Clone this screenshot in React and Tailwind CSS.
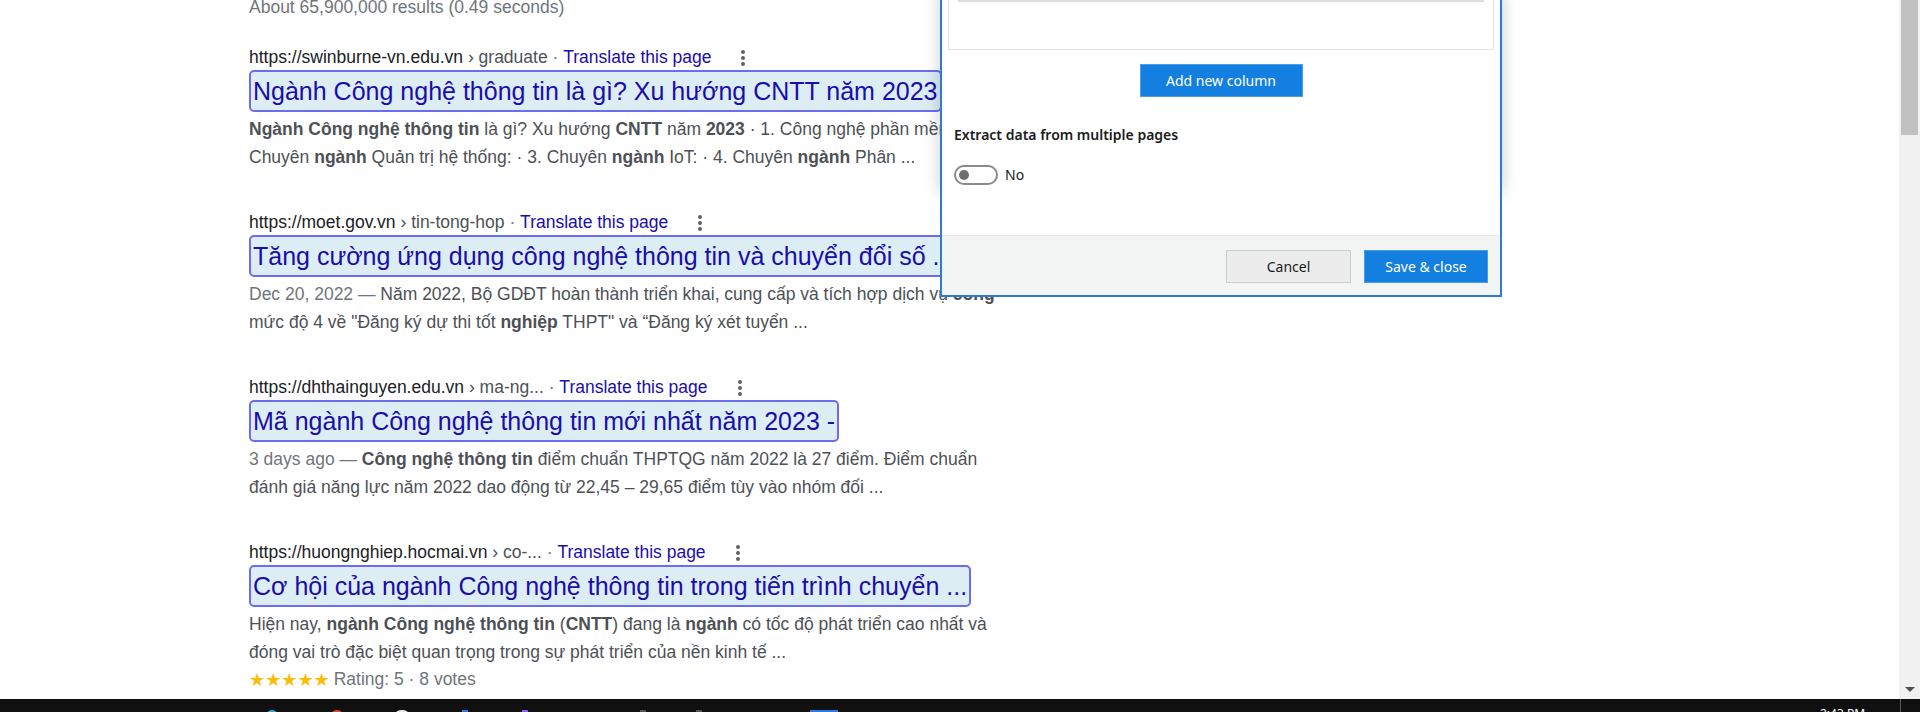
import { useState } from "react";

const results = [
  {
    site: "https://swinburne-vn.edu.vn",
    path: "› graduate",
    title: "Ngành Công nghệ thông tin là gì? Xu hướng CNTT năm 2023",
    lines: [
      [
        ["b", "Ngành Công nghệ thông tin"],
        ["t", " là gì? Xu hướng "],
        ["b", "CNTT"],
        ["t", " năm "],
        ["b", "2023"],
        ["t", " · 1. Công nghệ phần mềm: · 2."],
      ],
      [
        ["t", "Chuyên "],
        ["b", "ngành"],
        ["t", " Quản trị hệ thống: · 3. Chuyên "],
        ["b", "ngành"],
        ["t", " IoT: · 4. Chuyên "],
        ["b", "ngành"],
        ["t", " Phân ..."],
      ],
    ],
  },
  {
    site: "https://moet.gov.vn",
    path: "› tin-tong-hop",
    title: "Tăng cường ứng dụng công nghệ thông tin và chuyển đổi số ...",
    lines: [
      [
        ["d", "Dec 20, 2022 — "],
        ["t", "Năm 2022, Bộ GDĐT hoàn thành triển khai, cung cấp và tích hợp dịch vụ "],
        ["b", "công"],
      ],
      [
        ["t", "mức độ 4 về \"Đăng ký dự thi tốt "],
        ["b", "nghiệp"],
        ["t", " THPT\" và “Đăng ký xét tuyển ..."],
      ],
    ],
  },
  {
    site: "https://dhthainguyen.edu.vn",
    path: "› ma-ng...",
    title: "Mã ngành Công nghệ thông tin mới nhất năm 2023 -",
    lines: [
      [
        ["d", "3 days ago — "],
        ["b", "Công nghệ thông tin"],
        ["t", " điểm chuẩn THPTQG năm 2022 là 27 điểm. Điểm chuẩn"],
      ],
      [["t", "đánh giá năng lực năm 2022 dao động từ 22,45 – 29,65 điểm tùy vào nhóm đối ..."]],
    ],
  },
  {
    site: "https://huongnghiep.hocmai.vn",
    path: "› co-...",
    title: "Cơ hội của ngành Công nghệ thông tin trong tiến trình chuyển ...",
    lines: [
      [
        ["t", "Hiện nay, "],
        ["b", "ngành Công nghệ thông tin"],
        ["t", " ("],
        ["b", "CNTT"],
        ["t", ") đang là "],
        ["b", "ngành"],
        ["t", " có tốc độ phát triển cao nhất và"],
      ],
      [["t", "đóng vai trò đặc biệt quan trọng trong sự phát triển của nền kinh tế ..."]],
    ],
    rating: true,
  },
];

function Dots() {
  return (
    <svg width="6" height="18" viewBox="0 0 6 18" className="ml-[29px]">
      <circle cx="3" cy="3" r="2" fill="#5f6368" />
      <circle cx="3" cy="9" r="2" fill="#5f6368" />
      <circle cx="3" cy="15" r="2" fill="#5f6368" />
    </svg>
  );
}

function Result({ r, last }) {
  return (
    <div className={last ? "flex flex-col" : "flex flex-col mb-[39px]"}>
      <div className="h-[25px] flex items-center text-[17.5px] whitespace-nowrap">
        <span className="text-[#202124]">{r.site}</span>
        <span className="text-[#4d5156]">&nbsp;{r.path}</span>
        <span className="text-[#70757a]">&nbsp;·&nbsp;</span>
        <span className="text-[#1a0dab]">Translate this page</span>
        <Dots />
      </div>
      <div className="self-start h-[42px] flex items-center px-[2px] border-2 border-[#6b6cf2] rounded-[5px] bg-[#ddedf4] whitespace-nowrap">
        <span className="text-[25px] leading-none text-[#1a0dab]">{r.title}</span>
      </div>
      <div className="mt-[3px] text-[17.5px] leading-[28px] text-[#4d5156] whitespace-nowrap">
        {r.lines.map((line, i) => (
          <div key={i}>
            {line.map(([k, t], j) =>
              k === "b" ? (
                <b key={j} className="font-bold text-[#4d5156]">{t}</b>
              ) : k === "d" ? (
                <span key={j} className="text-[#70757a]">{t}</span>
              ) : (
                <span key={j}>{t}</span>
              )
            )}
          </div>
        ))}
      </div>
      {r.rating && (
        <div className="h-[26px] flex items-center text-[17.5px] text-[#70757a] whitespace-nowrap">
          <span className="text-[#fbbc04] text-[18px] font-['DejaVu_Sans',sans-serif] tracking-[0px]">★★★★★</span>
          <span className="ml-[4px]">Rating: 5 · 8 votes</span>
        </div>
      )}
    </div>
  );
}

function Toggle({ on }) {
  return (
    <div className="flex items-center gap-[7px]">
      <div className="w-[44px] h-[20px] rounded-full border-2 border-[#8a8a8a] flex items-center px-[3px]">
        <div className="w-[10px] h-[10px] rounded-full bg-[#6e6e6e]" />
      </div>
      <span className="text-[14px] text-[#1b1b1b]">{on ? "Yes" : "No"}</span>
    </div>
  );
}

function Dialog() {
  const [multi] = useState(false);
  return (
    <>
      <div className="absolute left-[940px] top-[-10px] w-[562px] h-[203px] shadow-[0_0_16px_rgba(0,0,0,0.2)] bg-white" />
      <div className="absolute left-[940px] top-[-2px] w-[562px] border-2 border-[#2e7bd4] bg-white flex flex-col font-['Noto_Sans',sans-serif]">
        <div className="mx-[6px] h-[50px] border border-t-0 border-[#e3e3e3] flex flex-col">
          <div className="mx-[9px] h-[2px] bg-[#dedede]" />
        </div>
        <div className="flex justify-center mt-[14px]">
          <button className="w-[163px] h-[33px] bg-[#1380e1] border border-[#4a9bea] text-white text-[14px]">
            Add new column
          </button>
        </div>
        <div className="mt-[27px] pl-[12px] h-[20px] flex items-center text-[14px] font-semibold text-[#1b1b1b]">
          Extract data from multiple pages
        </div>
        <div className="mt-[20px] pl-[12px]">
          <Toggle on={multi} />
        </div>
        <div className="mt-[50px] border-t border-[#e6e6e6] bg-[#f3f4f4] pt-[14px] pb-[12px] pr-[12px] flex justify-end gap-[13px]">
          <button className="w-[125px] h-[33px] bg-[#ececed] border border-[#cdcdcd] text-[14px] text-[#1b1b1b]">
            Cancel
          </button>
          <button className="w-[124px] h-[33px] bg-[#1380e1] border border-[#4a9bea] text-[14px] text-white">
            Save &amp; close
          </button>
        </div>
      </div>
    </>
  );
}

function Taskbar() {
  return (
    <div className="h-[13px] bg-[#101010] flex items-start overflow-hidden relative">
      <div className="flex items-start pt-[11px]">
        <div className="ml-[266px] w-[12px] h-[12px] rounded-full bg-[#29b6d8]" />
        <div className="ml-[52px] w-[14px] h-[14px] rounded-full bg-[#e0452f]" />
        <div className="ml-[50px] w-[16px] h-[14px] rounded-full bg-[#e8e8e8]" />
        <div className="ml-[52px] w-[6px] h-[10px] bg-[#2a7be0]" />
        <div className="ml-[54px] w-[6px] h-[10px] bg-[#8b5cf6]" />
        <div className="ml-[112px] w-[6px] h-[10px] bg-[#555]" />
        <div className="ml-[50px] w-[6px] h-[10px] bg-[#555]" />
        <div className="ml-[108px] w-[28px] h-[10px] bg-[#2a7be0]" />
      </div>
      <div className="absolute left-[1820px] top-[6px] text-[12px] text-white font-['Noto_Sans',sans-serif]">2:43 PM</div>
      <div className="absolute left-[1900px] top-0 w-px h-[13px] bg-[#5a5a5a]" />
    </div>
  );
}

export default function App() {
  return (
    <div className="w-[1920px] h-[712px] overflow-hidden bg-white flex flex-col font-['Liberation_Sans',Arial,sans-serif]">
      <div className="h-[699px] flex relative">
        <div className="flex-1 overflow-hidden pl-[249px]">
          <div className="mt-[-5px] h-[24px] flex items-center text-[17.5px] text-[#70757a]">
            About 65,900,000 results (0.49 seconds)
          </div>
          <div className="mt-[26px] flex flex-col">
            {results.map((r, i) => (
              <Result key={i} r={r} last={i === results.length - 1} />
            ))}
          </div>
        </div>
        <div className="w-[21px] bg-[#f1f1f1] flex flex-col items-center justify-between">
          <div className="w-[17px] h-[135px] bg-[#c1c1c1]" />
          <svg width="10" height="6" viewBox="0 0 10 6" className="mb-[6px]">
            <path d="M0 0 L10 0 L5 5 Z" fill="#505050" />
          </svg>
        </div>
        <Dialog />
      </div>
      <Taskbar />
    </div>
  );
}
